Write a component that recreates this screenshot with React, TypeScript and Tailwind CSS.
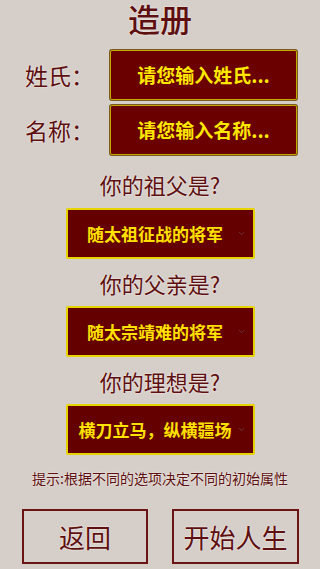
import { ChevronDown } from "lucide-react";

const font = { fontFamily: '"Noto Sans CJK SC", "Noto Sans", sans-serif' };

function Field({ label, placeholder }: { label: string; placeholder: string }) {
  return (
    <div className="flex items-center h-[50px]">
      <div className="w-[110px] pl-[25px] text-[23px] text-[#5e0f0f] [text-shadow:0_0_2px_#fff]">
        {label}
      </div>
      <div className="w-[187px] h-full flex items-center justify-center bg-[#6a0000] border border-[#c2a800] rounded-[2px] shadow-[0_0_0_1px_#7a5a20] text-[19px] font-bold text-[#ffe800]">
        {placeholder}
      </div>
    </div>
  );
}

function Question({ text }: { text: string }) {
  return (
    <div className="h-[30px] leading-[30px] text-center text-[22px] text-[#5e0f0f] [text-shadow:0_0_2px_#fff]">
      {text}
    </div>
  );
}

function Select({ value }: { value: string }) {
  return (
    <div className="mx-auto w-[189px] h-[51px] relative flex items-center justify-center bg-[#650000] border-2 border-[#e6d400] rounded-[2px] text-[17px] font-bold text-[#ffe100]">
      <span className="pr-[10px]">{value}</span>
      <ChevronDown className="absolute right-[7px] top-[19px] w-[9px] h-[9px] text-[#6a4a4a]" strokeWidth={2} />
    </div>
  );
}

export default function App() {
  return (
    <div style={font} className="w-[320px] h-[569px] overflow-hidden bg-[#d6cec8] flex flex-col">
      <div className="h-[36px] leading-[36px] text-center text-[32px] font-medium text-[#5e0f0f] [text-shadow:0_0_2px_#fff]">
        造册
      </div>
      <div className="mt-[14px]">
        <Field label="姓氏：" placeholder="请您输入姓氏..." />
      </div>
      <div className="mt-[5px]">
        <Field label="名称：" placeholder="请您输入名称..." />
      </div>
      <div className="mt-[14px]">
        <Question text="你的祖父是?" />
      </div>
      <div className="mt-[9px]">
        <Select value="随太祖征战的将军" />
      </div>
      <div className="mt-[9px]">
        <Question text="你的父亲是?" />
      </div>
      <div className="mt-[8px]">
        <Select value="随太宗靖难的将军" />
      </div>
      <div className="mt-[9px]">
        <Question text="你的理想是?" />
      </div>
      <div className="mt-[8px]">
        <Select value="横刀立马，纵横疆场" />
      </div>
      <div className="mt-[13px] h-[20px] leading-[20px] text-center text-[14px] text-[#5e0f0f] [text-shadow:0_0_2px_#fff]">
        提示:根据不同的选项决定不同的初始属性
      </div>
      <div className="mt-[21px] flex justify-between px-[22px] pr-[21px]">
        <div className="w-[126px] h-[55px] border-2 border-[#6a1414] flex items-center justify-center text-[26px] text-[#5e0f0f] [text-shadow:0_0_2px_#fff]">
          返回
        </div>
        <div className="w-[127px] h-[55px] border-2 border-[#6a1414] flex items-center justify-center text-[26px] text-[#5e0f0f] [text-shadow:0_0_2px_#fff]">
          开始人生
        </div>
      </div>
    </div>
  );
}
